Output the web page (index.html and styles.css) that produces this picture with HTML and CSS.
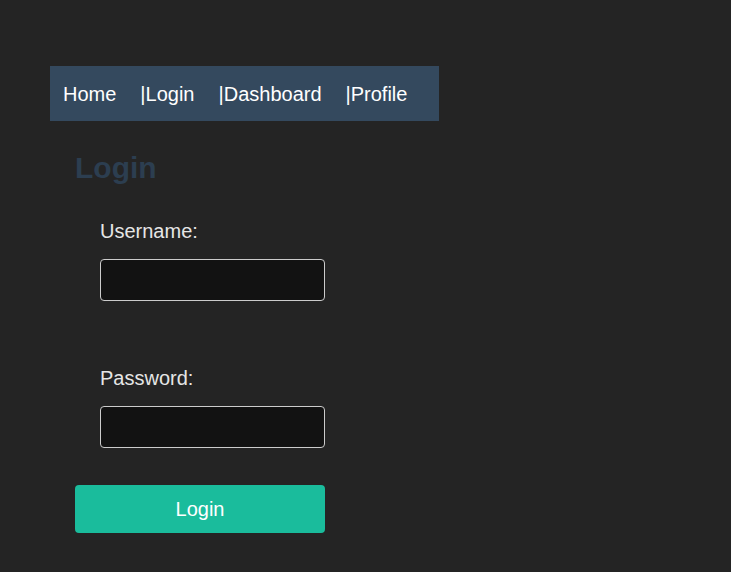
FILE: index.html
```html
<!DOCTYPE html>
<html lang="en">
<head>
<meta charset="utf-8">
<title>Login</title>
<link rel="stylesheet" href="styles.css">
</head>
<body>
<div class="page">
  <nav class="nav">
    <a href="#">Home</a>
    <a href="#">|Login</a>
    <a href="#">|Dashboard</a>
    <a href="#">|Profile</a>
  </nav>
  <main class="content">
    <h1 class="title">Login</h1>
    <form class="form">
      <div class="field">
        <label for="username">Username:</label>
        <input id="username" type="text">
      </div>
      <div class="field field-gap">
        <label for="password">Password:</label>
        <input id="password" type="password">
      </div>
      <button type="submit" class="btn">Login</button>
    </form>
  </main>
</div>
</body>
</html>
```

FILE: styles.css
```css
html, body {
  margin: 0;
  background: #242424;
}
body {
  font-family: "Liberation Sans", Arial, sans-serif;
  color: #e6e6e6;
}
.page {
  padding: 66px 50px 0;
}
.nav {
  display: inline-flex;
  align-items: center;
  height: 55px;
  box-sizing: border-box;
  background: #34495e;
  padding: 2px 32px 0 13px;
  gap: 24px;
}
.nav a {
  color: #ffffff;
  font-size: 20px;
  line-height: 23px;
  text-decoration: none;
}
.content {
  padding: 0 25px;
  width: 250px;
}
.title {
  font-size: 30px;
  line-height: 34px;
  font-weight: bold;
  color: #2c3e50;
  margin: 30px 0 35px;
}
.form {
  display: flex;
  flex-direction: column;
  align-items: flex-start;
}
.field {
  padding-left: 25px;
}
.field-gap {
  margin-top: 66px;
}
.field label {
  display: block;
  font-size: 20px;
  line-height: 23px;
  color: #e6e6e6;
}
.field input {
  display: block;
  margin-top: 16px;
  width: 225px;
  height: 42px;
  box-sizing: border-box;
  background: #121212;
  border: 1px solid #cccccc;
  border-radius: 4px;
  color: #fff;
  padding: 0 10px;
  font-size: 16px;
}
.btn {
  margin-top: 37px;
  width: 250px;
  height: 48px;
  background: #1abc9c;
  border: none;
  border-radius: 4px;
  color: #ffffff;
  font-family: "Liberation Sans", Arial, sans-serif;
  font-size: 20px;
}
```
